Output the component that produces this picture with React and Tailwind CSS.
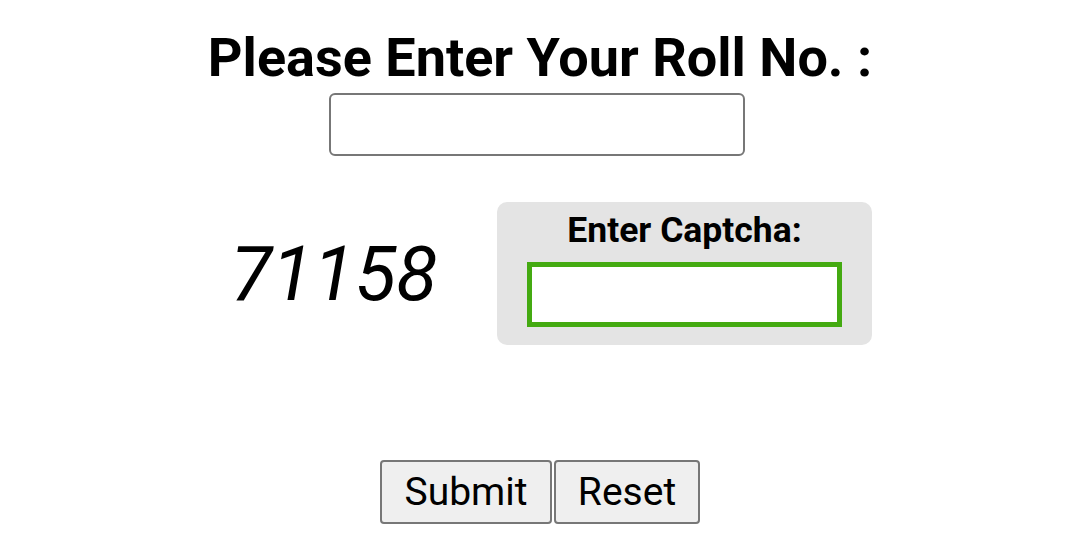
export default function App() {
  return (
    <div className="flex h-[550px] w-full flex-col items-center bg-white font-['Roboto',sans-serif] text-black">
      <h1 className="mt-[31px] text-[54px] font-bold leading-none">Please Enter Your Roll No. :</h1>
      <input
        type="text"
        className="mr-[7px] mt-[8px] h-[63px] w-[416px] rounded-[6px] border-[2.5px] border-[#777] bg-white outline-none"
      />

      <div className="mt-[46px] flex items-center">
        <div className="w-[289px] pr-[37px] text-center text-[76px] italic leading-none">71158</div>
        <div className="flex h-[143px] w-[375px] flex-col items-center rounded-[10px] bg-[#e4e4e4] pt-[9px]">
          <div className="text-[35.5px] font-bold leading-[38px]">Enter Captcha:</div>
          <input
            type="text"
            className="mt-[13px] h-[65px] w-[315px] border-[5px] border-[#44aa11] bg-white outline-none"
          />
        </div>
      </div>

      <div className="mt-[115px] flex">
        <button className="h-[64px] w-[172px] rounded-[4px] border-2 border-[#777] bg-[#efefef] text-[39px] leading-none">
          Submit
        </button>
        <button className="ml-[2px] h-[64px] w-[146px] rounded-[4px] border-2 border-[#777] bg-[#efefef] text-[39px] leading-none">
          Reset
        </button>
      </div>
    </div>
  )
}
